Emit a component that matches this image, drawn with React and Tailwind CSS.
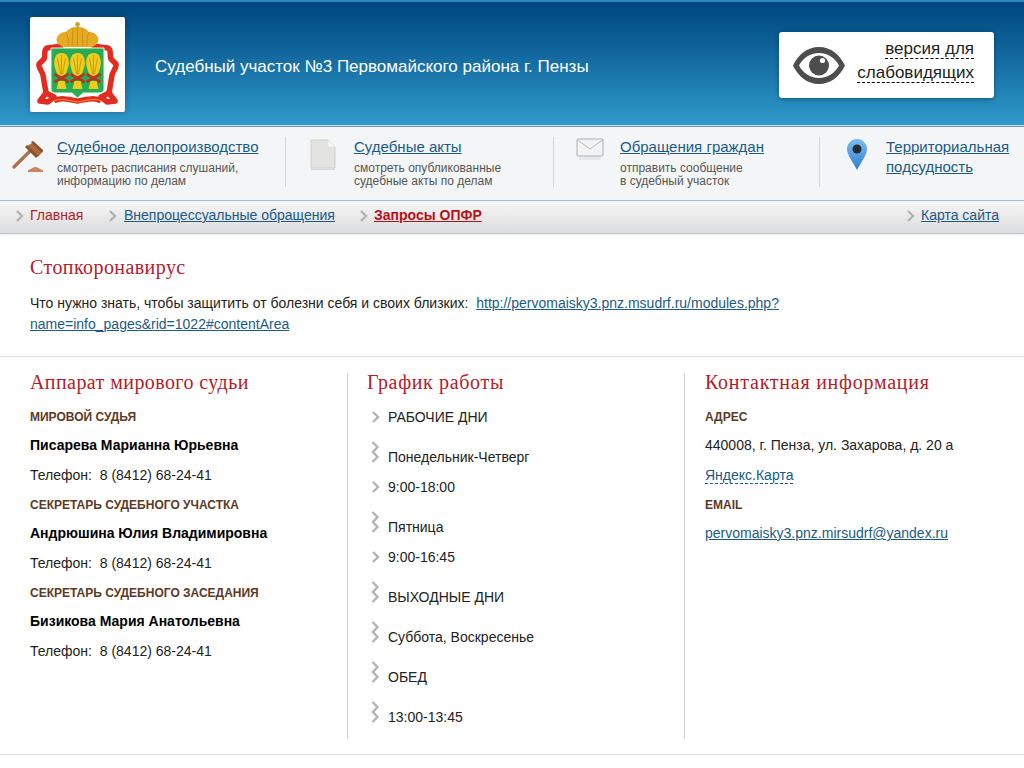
import React from 'react';

const sans = { fontFamily: '"Liberation Sans", Arial, sans-serif' };
const serif = { fontFamily: '"Liberation Serif", Georgia, serif' };

const Emblem = () => (
  <svg width="95" height="95" viewBox="0 0 95 95">
    {/* red mantle */}
    <g fill="none" stroke="#e42b20" strokeWidth="5.5" strokeLinejoin="round">
      <path d="M33 29 L17 31 C13 33 16 38 14 42 L9 47 C8 50 12 54 13 58 L16 76" />
      <path d="M62 29 L78 31 C82 33 79 38 81 42 L86 47 C87 50 83 54 82 58 L79 76" />
      <path d="M10 84 L16 76 L24 80 L18 85 Z" />
      <path d="M85 84 L79 76 L71 80 L77 85 Z" />
      <path d="M24 84 C30 80 36 82 47.5 84 C59 82 65 80 71 84" />
    </g>
    <path d="M24 84 C30 81 36 83 47.5 85 C59 83 65 81 71 84" stroke="#f0a03a" strokeWidth="0.9" fill="none" />
    {/* crown */}
    <path d="M28 27 C24 21 29 15 36 15 C39 11 43 10 47.5 10 C52 10 56 11 59 15 C66 15 71 21 67 27 L62 30 L33 30 Z" fill="#e6ab22" />
    <path d="M36 15 C38 20 39 25 38 29 M59 15 C57 20 56 25 57 29 M47.5 10 L47.5 29 M43 11 L42 29 M52 11 L53 29" stroke="#c28814" strokeWidth="0.8" fill="none" />
    <circle cx="47.5" cy="7.5" r="2.4" fill="#cfa030" />
    {/* shield */}
    <path d="M21 31 L74 31 L74 72 C74 75 72 76 69 76 L53 76 L47.5 81 L42 76 L26 76 C23 76 21 75 21 72 Z" fill="#27ab54" stroke="#eef3e2" strokeWidth="1" />
    {/* sheaves */}
    {[31.5, 47.5, 63.5].map((x) => (
      <g key={x}>
        <path d={`M${x} 36 C${x + 7} 36 ${x + 8} 44 ${x + 7} 49 C${x + 6} 54 ${x + 4} 58 ${x + 2} 60 L${x - 2} 60 C${x - 4} 58 ${x - 6} 54 ${x - 7} 49 C${x - 8} 44 ${x - 7} 36 ${x} 36 Z`} fill="#efcb1e" />
        <path d={`M${x - 4} 41 L${x - 1} 57 M${x + 4} 41 L${x + 1} 57 M${x} 38 L${x} 58`} stroke="#b98f16" strokeWidth="0.8" fill="none" />
        <path d={`M${x - 7} 57 L${x + 7} 65 M${x + 7} 57 L${x - 7} 65`} stroke="#b5351f" strokeWidth="2.6" />
        <path d={`M${x - 3} 64 L${x + 3} 64 L${x + 5} 72 L${x - 5} 72 Z`} fill="#efcb1e" />
      </g>
    ))}
  </svg>
);

const EyeIcon = () => (
  <svg width="52" height="37" viewBox="0 0 52 37">
    <path fillRule="evenodd" fill="#4d4d4d" d="M26 0 C38 0 47 8 52 18.5 C47 29 38 37 26 37 C14 37 5 29 0 18.5 C5 8 14 0 26 0 Z M26 6 C17 6 10 11 6 18.5 C10 26 17 31 26 31 C35 31 42 26 46 18.5 C42 11 35 6 26 6 Z" />
    <circle cx="26" cy="18.5" r="10" fill="#4d4d4d" />
    <circle cx="29.5" cy="13.5" r="2.6" fill="#ffffff" />
  </svg>
);

const GavelIcon = () => (
  <svg width="32" height="32" viewBox="0 0 32 32">
    <path d="M2 26 L17 11" stroke="#ad6f4d" strokeWidth="3.2" strokeLinecap="round" />
    <path d="M15 5 L22 1 L31 10 L26 16 Z" fill="#a8693f" />
    <path d="M19 1 L21 0 L31 9 L30 12 Z" fill="#8a5230" />
    <path d="M13 6 L15 4 L26 15 L24 17 Z" fill="#8a5230" />
    <path d="M16 31 L16 29 C19 29 20 26 23.5 26 C27 26 28 29 31 29 L31 31 Z" fill="#c98660" />
  </svg>
);

const DocIcon = () => (
  <svg width="26" height="31" viewBox="0 0 26 31">
    <path d="M1 1 L18 1 L25 8 L25 29 L1 29 Z" fill="#e3e3e1" stroke="#cfcfcd" strokeWidth="1" />
    <path d="M18 1 L18 8 L25 8 Z" fill="#f8f8f8" stroke="#dcdcda" strokeWidth="0.6" />
    <rect x="1" y="29.5" width="24" height="1.5" fill="#d9d9d9" />
  </svg>
);

const MailIcon = () => (
  <svg width="28" height="24" viewBox="0 0 28 24">
    <rect x="1" y="1" width="26" height="17" rx="1" fill="#f3f3f3" stroke="#a9aeb2" />
    <path d="M1.5 2 L14 11 L26.5 2" fill="none" stroke="#b4b9bc" />
    <rect x="3" y="19" width="22" height="3" fill="#e9e9e9" />
  </svg>
);

const PinIcon = () => (
  <svg width="22" height="32" viewBox="0 0 22 32">
    <defs>
      <linearGradient id="pinFill" x1="0" y1="0" x2="0" y2="1">
        <stop offset="0" stopColor="#7dbcf0" />
        <stop offset="1" stopColor="#2d7fd0" />
      </linearGradient>
    </defs>
    <path d="M11 0 C17 0 21 5 21 10 C21 16 15 23 11 31 C7 23 1 16 1 10 C1 5 5 0 11 0 Z" fill="url(#pinFill)" />
    <circle cx="11" cy="10" r="4.5" fill="#222c33" />
  </svg>
);

const Chevron = ({ double }) => (
  <svg width="9" height={double ? 22 : 12} viewBox={double ? '0 0 9 22' : '0 0 9 12'} className="shrink-0">
    {double ? (
      <path d="M1.5 1 L6.5 6 L2 11 L6.5 16 L1.5 21" fill="none" stroke="#b3b3b3" strokeWidth="2.4" />
    ) : (
      <path d="M2 1 L7 6 L2 11" fill="none" stroke="#b3b3b3" strokeWidth="2.4" />
    )}
  </svg>
);

const NavItem = ({ width, iconBox, icon, title, sub }) => (
  <div className={`flex shrink-0 ${width}`}>
    <div className={`shrink-0 ${iconBox}`}>{icon}</div>
    <div>
      <a className="block text-[15px] leading-[20px] text-[#1b5a84] underline">{title}</a>
      {sub && <p className="mt-[5px] text-[12px] leading-[13px] text-[#555555]">{sub}</p>}
    </div>
  </div>
);

const Label = ({ children }) => (
  <p className="text-[12px] leading-[20px] font-bold text-[#5c3a26]">{children}</p>
);
const Name = ({ children }) => (
  <p className="mt-[8px] text-[14px] leading-[20px] font-bold text-black">{children}</p>
);
const Phone = () => (
  <p className="mt-[10px] mb-[10px] text-[14px] leading-[20px] text-[#222222]">Телефон:&nbsp; 8 (8412) 68-24-41</p>
);

const ColTitle = ({ children, spacing }) => (
  <h2 className={`text-[20px] leading-[24px] text-[#b3202a] ${spacing}`} style={serif}>{children}</h2>
);

const schedule = [
  ['РАБОЧИЕ ДНИ', false],
  ['Понедельник-Четверг', true],
  ['9:00-18:00', false],
  ['Пятница', true],
  ['9:00-16:45', false],
  ['ВЫХОДНЫЕ ДНИ', true],
  ['Суббота, Воскресенье', true],
  ['ОБЕД', true],
  ['13:00-13:45', true],
];

const App = () => {
  return (
    <div className="w-[1024px] h-[768px] overflow-hidden bg-white" style={sans}>
      <header className="flex h-[126px] items-start bg-gradient-to-b from-[#00457f] to-[#2f9aca] border-t-2 border-t-[#2a86c0] border-b border-b-[#c9d9e6] pt-[15px] pl-[30px]">
        <div className="w-[95px] h-[95px] shrink-0 rounded-[2px] bg-white shadow-[0_0_6px_rgba(0,0,0,0.25)]">
          <Emblem />
        </div>
        <div className="ml-[30px] mt-[38px] w-[624px] text-[17px] leading-[24px] text-white">
          Судебный участок №3 Первомайского района г. Пензы
        </div>
        <div className="flex mt-[15px] w-[215px] h-[66px] rounded-[3px] bg-white shadow-[0_1px_5px_rgba(0,0,0,0.35)] pl-[14px] pr-[20px] items-center justify-between">
          <EyeIcon />
          <div className="self-start mt-[5px] text-right text-[17px] leading-[24px] text-[#222222]">
            <span className="block"><span className="border-b border-dashed border-black">версия для</span></span>
            <span className="block"><span className="border-b border-dashed border-black">слабовидящих</span></span>
          </div>
        </div>
      </header>

      <nav className="flex h-[75px] bg-[#f4f5f6] border-t border-t-[#6a9bcb] border-b border-b-[#a7bdd4] pt-[10px]">
        <NavItem width="w-[286px] h-[50px] border-r border-r-[#d5d5d5]" iconBox="pl-[12px] pt-[4px] w-[57px]" icon={<GavelIcon />}
          title="Судебное делопроизводство" sub={<>смотреть расписания слушаний,<br />информацию по делам</>} />
        <NavItem width="w-[268px] h-[50px] border-r border-r-[#d5d5d5]" iconBox="pl-[24px] pt-[2px] w-[68px]" icon={<DocIcon />}
          title="Судебные акты" sub={<>смотреть опубликованные<br />судебные акты по делам</>} />
        <NavItem width="w-[266px] h-[50px] border-r border-r-[#d5d5d5]" iconBox="pl-[22px] pt-[1px] w-[66px]" icon={<MailIcon />}
          title="Обращения граждан" sub={<>отправить сообщение<br />в судебный участок</>} />
        <NavItem width="w-[204px] h-[50px]" iconBox="pl-[26px] pt-[2px] w-[66px]" icon={<PinIcon />}
          title={<>Территориальная<br />подсудность</>} />
      </nav>

      <div className="flex h-[33px] items-center pb-[3px] bg-gradient-to-b from-[#f6f6f6] to-[#dcdcdc] border-b border-b-[#b4c4d2] text-[14px] shadow-[0_1px_2px_rgba(0,0,0,0.08)]">
        <div className="flex items-center w-[108px] pl-[15px]"><Chevron /><span className="ml-[6px] text-[#b01f24]">Главная</span></div>
        <div className="flex items-center w-[251px]"><Chevron /><a className="ml-[7px] text-[#1b5a84] underline">Внепроцессуальные обращения</a></div>
        <div className="flex items-center w-[547px]"><Chevron /><a className="ml-[6px] font-bold text-[#b8101a] underline">Запросы ОПФР</a></div>
        <div className="flex items-center"><Chevron /><a className="ml-[6px] text-[#1b5a84] underline">Карта сайта</a></div>
      </div>

      <section className="h-[123px] border-b border-b-[#dddddd] px-[30px] pt-[21px]">
        <h2 className="text-[20px] leading-[24px] tracking-[0.42px] text-[#b3202a]" style={serif}>Стопкоронавирус</h2>
        <p className="mt-[14px] text-[14px] leading-[21px] text-[#222222]">
          Что нужно знать, чтобы защитить от болезни себя и своих близких:&nbsp;{' '}
          <a className="text-[#1b5a84] underline">http://pervomaisky3.pnz.msudrf.ru/modules.php?name=info_pages&amp;rid=1022#contentArea</a>
        </p>
      </section>

      <section className="flex h-[398px] border-b border-b-[#dddddd] pt-[16px]">
        <div className="w-[348px] h-[366px] shrink-0 border-r border-r-[#d5d5d5] pl-[30px] pt-0 text-[14px]">
          <div className="-mt-[3px]"><ColTitle spacing="tracking-[0.42px]">Аппарат мирового судьи</ColTitle></div>
          <div className="mt-[13px]">
            <Label>МИРОВОЙ СУДЬЯ</Label>
            <Name>Писарева Марианна Юрьевна</Name>
            <Phone />
            <Label>СЕКРЕТАРЬ СУДЕБНОГО УЧАСТКА</Label>
            <Name>Андрюшина Юлия Владимировна</Name>
            <Phone />
            <Label>СЕКРЕТАРЬ СУДЕБНОГО ЗАСЕДАНИЯ</Label>
            <Name>Бизикова Мария Анатольевна</Name>
            <Phone />
          </div>
        </div>
        <div className="w-[337px] h-[366px] shrink-0 border-r border-r-[#d5d5d5] pl-[19px]">
          <div className="-mt-[3px]"><ColTitle spacing="tracking-[0.65px]">График работы</ColTitle></div>
          <ul className="mt-[13px] text-[14px] leading-[20px] text-[#222222]">
            {schedule.map(([text, double], i) => (
              <li key={i} className={`flex h-[20px] ${i === 0 ? '' : double ? 'mt-[20px]' : 'mt-[10px]'}`}>
                <span className="relative w-[21px] shrink-0">
                  <span className={`absolute left-[4px] ${double ? 'bottom-[4px]' : 'top-[4px]'} flex`}><Chevron double={double} /></span>
                </span>
                {text}
              </li>
            ))}
          </ul>
        </div>
        <div className="pl-[20px] text-[14px] text-[#222222]">
          <div className="-mt-[3px]"><ColTitle spacing="tracking-[0.75px]">Контактная информация</ColTitle></div>
          <div className="mt-[13px]">
            <Label>АДРЕС</Label>
            <p className="mt-[8px] leading-[20px]">440008, г. Пенза, ул. Захарова, д. 20 а</p>
            <p className="mt-[10px] leading-[20px]"><a className="text-[#1b5a84] border-b border-dashed border-[#1b5a84]">Яндекс.Карта</a></p>
            <div className="mt-[10px]"><Label>EMAIL</Label></div>
            <p className="mt-[8px] leading-[20px]"><a className="text-[#1b5a84] underline">pervomaisky3.pnz.mirsudrf@yandex.ru</a></p>
          </div>
        </div>
      </section>
    </div>
  );
};

export default App;
